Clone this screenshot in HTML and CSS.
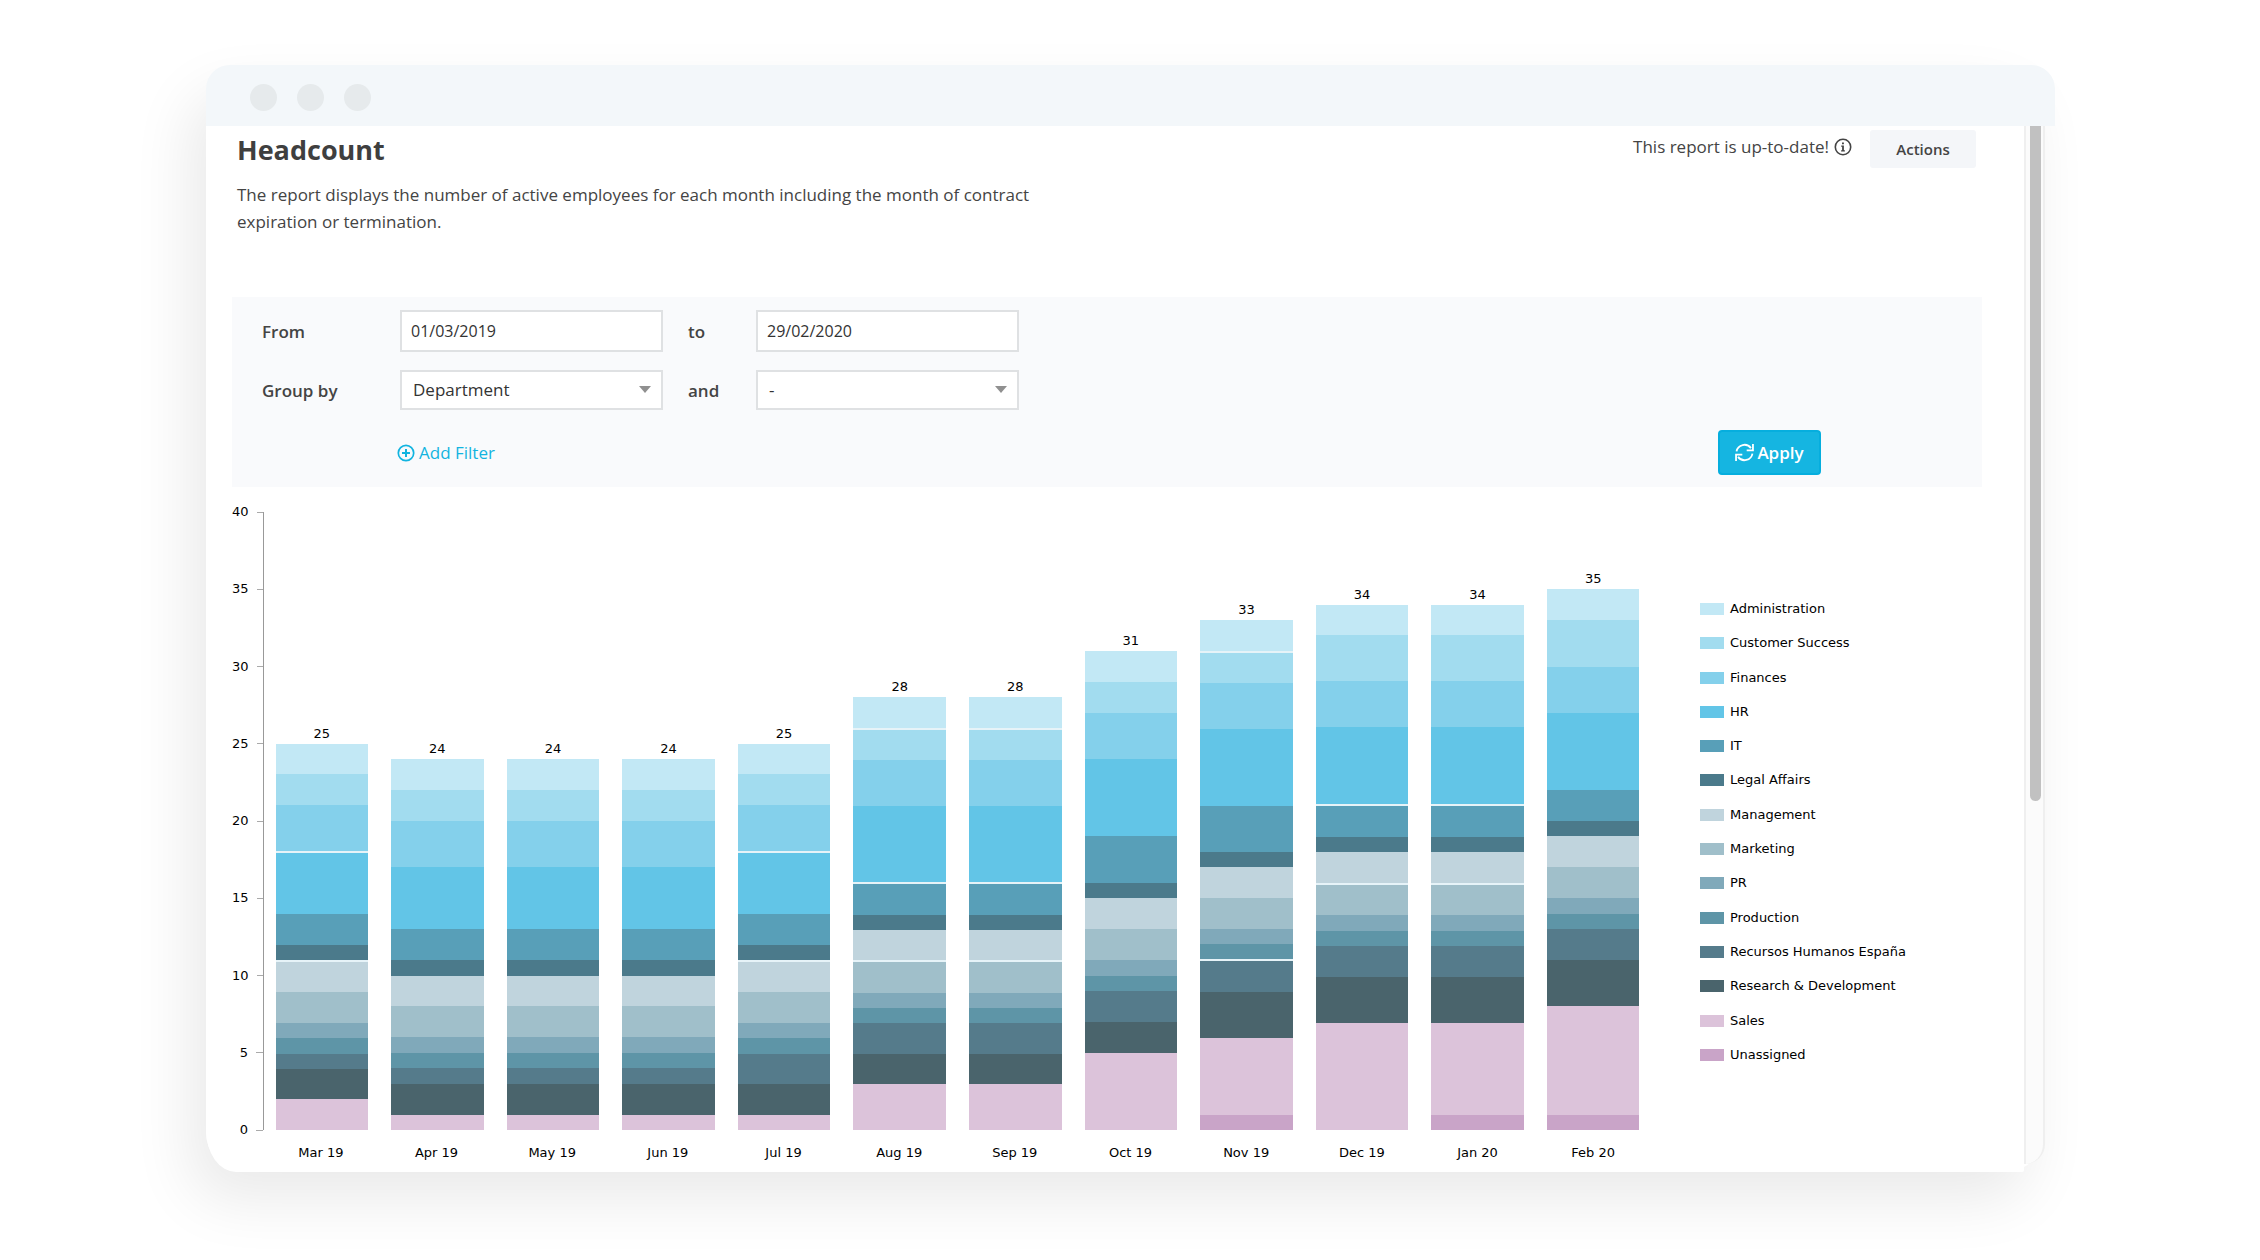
FILE: index.html
```html
<!DOCTYPE html>
<html lang="en">
<head>
<meta charset="utf-8">
<title>Headcount</title>
<link rel="stylesheet" href="styles.css">
</head>
<body>
<div class="window">
  <div class="titlebar"><span class="dot"></span><span class="dot"></span><span class="dot"></span></div>
  <div class="viewport">
    <main class="content">
      <header class="report-head">
        <div class="intro">
          <h1 class="title">Headcount</h1>
          <p class="lead">The report displays the number of active employees for each month including the month of contract expiration or termination.</p>
        </div>
        <div class="status">
          <span>This report is up-to-date!</span>
          <svg class="icon-info" viewBox="0 0 18 18" aria-hidden="true"><circle cx="9" cy="9" r="7.7" fill="none" stroke="currentColor" stroke-width="1.6"/><path d="M8 4.4h1.9v1.8H8zM7.2 7.5h2.7v4.7h1v1.3H7.1v-1.3h1V8.8h-.9z" fill="currentColor"/></svg>
        </div>
        <button class="btn-actions" type="button">Actions</button>
      </header>

      <form class="filters">
        <div class="fields">
          <label for="from">From</label>
          <input class="control" id="from" type="text" value="01/03/2019">
          <label class="mid" for="to">to</label>
          <input class="control" id="to" type="text" value="29/02/2020">
          <label for="group">Group by</label>
          <select class="control" id="group"><option>Department</option></select>
          <label class="mid" for="group2">and</label>
          <select class="control" id="group2"><option>-</option></select>
        </div>
        <div class="filter-actions">
          <a class="add-filter" href="#">
            <svg class="icon-plus" viewBox="0 0 18 18" aria-hidden="true"><circle cx="9" cy="9" r="7.7" fill="none" stroke="currentColor" stroke-width="1.7"/><path d="M9 5v8M5 9h8" stroke="currentColor" stroke-width="2"/></svg>
            Add Filter</a>
          <button class="btn-apply" type="button">
            <svg class="icon-refresh" viewBox="0 0 20 20" aria-hidden="true"><g fill="none" stroke="currentColor" stroke-width="1.9"><path d="M1.6 8.8A8.5 8.5 0 0 1 16.8 5.4"/><path d="M18.9 1v6.8h-6.6"/><path d="M18.4 11.2A8.5 8.5 0 0 1 3.2 14.6"/><path d="M1.1 19v-6.8h6.6"/></g></svg>
            Apply</button>
        </div>
      </form>

      <section class="chart" aria-label="Headcount by department">
        <div class="y-axis" id="y-axis"></div>
        <div class="plot" id="plot"></div>
        <ul class="legend" id="legend"></ul>
        <div class="x-axis" id="x-axis"></div>
      </section>
    </main>
    <div class="track"><div class="thumb"></div></div>
  </div>
</div>
<script src="chart.js"></script>
</body>
</html>
```
FILE: styles.css
```css
* { box-sizing: border-box; }

body {
  margin: 0;
  padding: 65px 215px 88px 206px;
  background: #fff;
  color: #444;
  font: 17px/27px "Open Sans", sans-serif;
}

.window {
  border-radius: 40px;
  box-shadow: -16px 28px 60px rgba(0, 0, 0, .085);
}

/* Title bar, slightly wider than the page below it */
.titlebar {
  display: flex;
  align-items: center;
  gap: 20px;
  height: 61px;
  margin-right: -10px;
  padding: 4px 44px 0;
  background: #f3f7fa;
  border-radius: 24px 24px 0 0;
}
.dot {
  width: 27px;
  height: 27px;
  border-radius: 50%;
  background: #e6eaec;
}

.viewport { display: flex; }
.content {
  flex: 1;
  min-width: 0;
  padding: 4px 42px 9px 26px;
  background: #fff;
  border-radius: 0 0 2px 30px / 0 0 2px 42px;
}
.track {
  width: 21px;
  margin-bottom: 8px;
  padding: 0 4px;
  background: #fbfbfb;
  border: solid #efefef;
  border-width: 0 2px;
  border-bottom-right-radius: 20px;
}
.thumb {
  width: 11px;
  height: 65%;
  background: #c1c1c1;
  border-radius: 0 0 6px 6px;
}

/* Report heading */
.report-head {
  display: flex;
  align-items: flex-start;
  padding: 0 6px 0 5px;
}
.intro { flex: 1; }
.title {
  margin: 2px 0 13px;
  font-size: 27px;
  line-height: 36px;
  font-weight: 700;
  color: #3f3f3f;
}
.lead {
  max-width: 820px;
  margin: 0 0 62px;
}
.status {
  display: flex;
  align-items: center;
  gap: 5px;
  padding-top: 3px;
}
.icon-info, .icon-plus { width: 18px; height: 18px; }
.btn-actions {
  width: 106px;
  height: 38px;
  margin-left: 18px;
  border: 0;
  border-radius: 3px;
  background: #f4f6f9;
  color: #444;
  font: 600 15px/20px "Open Sans", sans-serif;
}

/* Filter panel */
.filters {
  padding: 13px 0 12px 30px;
  background: #f9fafc;
}
.fields {
  display: grid;
  grid-template-columns: 138px 263px 93px 263px;
  grid-template-rows: 42px 40px;
  row-gap: 18px;
  align-items: center;
  font-weight: 600;
}
.mid { padding-left: 25px; }
.control {
  width: 100%;
  height: 100%;
  padding: 0 9px;
  border: 2px solid #dfe1e3;
  border-radius: 0;
  background: #fff;
  color: #333;
  font: 16px/24px "Open Sans", sans-serif;
}
select.control {
  padding: 0 11px;
  appearance: none;
  font-size: 17px;
  background: #fff url("data:image/svg+xml,%3Csvg xmlns='http://www.w3.org/2000/svg' width='12' height='7'%3E%3Cpath d='M0 0h12L6 7z' fill='%23909090'/%3E%3C/svg%3E") no-repeat right 10px top 14px;
}
.filter-actions {
  display: flex;
  justify-content: space-between;
  align-items: center;
  margin-top: 20px;
  padding: 0 161px 0 135px;
}
.add-filter {
  display: flex;
  align-items: center;
  gap: 4px;
  color: #12b4e0;
  text-decoration: none;
}
.btn-apply {
  display: flex;
  justify-content: center;
  align-items: center;
  gap: 3px;
  width: 103px;
  height: 45px;
  border: 2px solid #06aede;
  border-radius: 4px;
  background: #15b5e1;
  color: #fff;
  font: 600 17px/24px "Open Sans", sans-serif;
}
.icon-refresh { width: 19px; height: 19px; }

/* Stacked bar chart */
.chart {
  display: grid;
  grid-template-columns: 31px 1fr 331px;
  margin-top: 25px;
  color: #000;
  font: 13px/20px "DejaVu Sans", sans-serif;
}
.y-axis {
  display: flex;
  flex-direction: column;
  justify-content: space-between;
  margin: -10px 0;
}
.y-label {
  display: flex;
  justify-content: flex-end;
  align-items: center;
  gap: 8px;
}
.y-label::after {
  content: "";
  width: 7px;
  height: 1px;
  background: #aaa;
}
.plot {
  display: grid;
  grid-template-columns: repeat(12, 1fr);
  height: 618px;
  border-left: 1px solid #999;
}
.column {
  display: flex;
  flex-direction: column;
  justify-content: flex-end;
  align-items: center;
}
.bar {
  display: flex;
  flex-direction: column;
  width: 80%;
}
.seg { flex: 1 1 0; }
.gap-above { border-top: 2px solid #e6f3f8; }
.x-axis {
  grid-column: 2;
  display: grid;
  grid-template-columns: repeat(12, 1fr);
  margin-top: 13px;
  text-align: center;
}
.legend {
  display: flex;
  flex-direction: column;
  justify-content: space-between;
  margin: 0;
  padding: 87px 0 65px 49px;
  list-style: none;
}
.legend-item {
  display: flex;
  align-items: center;
  gap: 6px;
}
.swatch { width: 24px; height: 12px; }

.administration { background: #c2e8f5; }
.customer-success { background: #a2dcef; }
.finances { background: #84d0eb; }
.hr { background: #62c5e7; }
.it { background: #589fb8; }
.legal { background: #4b7a8b; }
.management { background: #c0d4dd; }
.marketing { background: #a0bfca; }
.pr { background: #80a9ba; }
.production { background: #5e95a7; }
.recursos { background: #557b8b; }
.research { background: #4a646c; }
.sales { background: #dcc3da; }
.unassigned { background: #c9a4c8; }
```
FILE: chart.js
```js
const MAX = 40;

// Departments, in stacking order from the top of a bar down
const departments = [
  ["administration", "Administration"],
  ["customer-success", "Customer Success"],
  ["finances", "Finances"],
  ["hr", "HR"],
  ["it", "IT"],
  ["legal", "Legal Affairs"],
  ["management", "Management"],
  ["marketing", "Marketing"],
  ["pr", "PR"],
  ["production", "Production"],
  ["recursos", "Recursos Humanos España"],
  ["research", "Research & Development"],
  ["sales", "Sales"],
  ["unassigned", "Unassigned"]
];

// Month, employees per department, levels with a light divider
const months = [
  ["Mar 19", [2, 2, 3, 4, 2, 1, 2, 2, 1, 1, 1, 2, 2, 0], [18, 11]],
  ["Apr 19", [2, 2, 3, 4, 2, 1, 2, 2, 1, 1, 1, 2, 1, 0], []],
  ["May 19", [2, 2, 3, 4, 2, 1, 2, 2, 1, 1, 1, 2, 1, 0], []],
  ["Jun 19", [2, 2, 3, 4, 2, 1, 2, 2, 1, 1, 1, 2, 1, 0], []],
  ["Jul 19", [2, 2, 3, 4, 2, 1, 2, 2, 1, 1, 2, 2, 1, 0], [18, 11]],
  ["Aug 19", [2, 2, 3, 5, 2, 1, 2, 2, 1, 1, 2, 2, 3, 0], [26, 16, 11]],
  ["Sep 19", [2, 2, 3, 5, 2, 1, 2, 2, 1, 1, 2, 2, 3, 0], [26, 16, 11]],
  ["Oct 19", [2, 2, 3, 5, 3, 1, 2, 2, 1, 1, 2, 2, 5, 0], []],
  ["Nov 19", [2, 2, 3, 5, 3, 1, 2, 2, 1, 1, 2, 3, 5, 1], [31, 11]],
  ["Dec 19", [2, 3, 3, 5, 2, 1, 2, 2, 1, 1, 2, 3, 7, 0], [21, 16]],
  ["Jan 20", [2, 3, 3, 5, 2, 1, 2, 2, 1, 1, 2, 3, 6, 1], [21, 16]],
  ["Feb 20", [2, 3, 3, 5, 2, 1, 2, 2, 1, 1, 2, 3, 7, 1], []]
];

function add(parent, tag, className, text) {
  const el = document.createElement(tag);
  if (className) el.className = className;
  if (text !== undefined) el.textContent = text;
  parent.appendChild(el);
  return el;
}

const yAxis = document.getElementById("y-axis");
for (let v = MAX; v >= 0; v -= 5) add(yAxis, "div", "y-label", v);

const plot = document.getElementById("plot");
const xAxis = document.getElementById("x-axis");
for (const [name, values, dividers] of months) {
  const total = values.reduce((a, b) => a + b, 0);
  const column = add(plot, "div", "column");
  add(column, "span", "total", total);
  const bar = add(column, "div", "bar");
  bar.style.height = (total / MAX) * 100 + "%";
  let level = total;
  values.forEach((n, i) => {
    if (!n) return;
    const divided = dividers.includes(level) ? " gap-above" : "";
    const seg = add(bar, "div", "seg " + departments[i][0] + divided);
    seg.style.flexGrow = n;
    level -= n;
  });
  add(xAxis, "span", "", name);
}

const legend = document.getElementById("legend");
for (const [key, label] of departments) {
  const item = add(legend, "li", "legend-item");
  add(item, "span", "swatch " + key);
  add(item, "span", "", label);
}
```
